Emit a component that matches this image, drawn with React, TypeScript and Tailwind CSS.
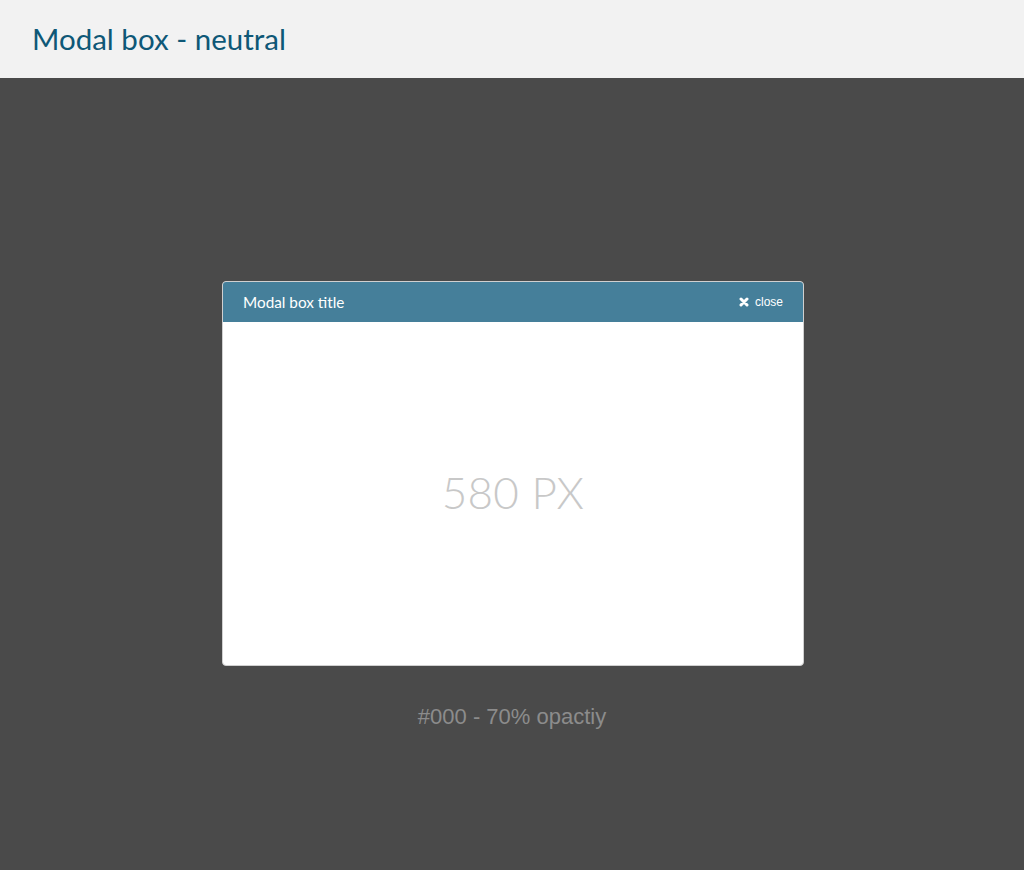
import React from "react";

const App = () => {
  return (
    <div className="w-full min-h-[870px] flex flex-col bg-[#4a4a4a]" style={{ fontFamily: "Lato, sans-serif" }}>
      <div className="h-[78px] bg-[#f2f2f2] flex items-center px-8">
        <h1 className="text-[29.5px] leading-none text-[#0e5877] font-[Lato,sans-serif]">Modal box - neutral</h1>
      </div>
      <div className="flex-1 flex flex-col items-center pt-[203px]">
        <div className="w-[582px] ml-[2px] rounded-[4px] border border-[#d0d0d0] bg-white overflow-hidden">
          <div className="h-[40px] bg-[#457f9a] flex items-center justify-between pl-5 pr-5">
            <span className="text-[15.3px] text-white">Modal box title</span>
            <button className="flex items-center gap-[6px] text-white text-[12px] font-['Liberation_Sans',Arial,sans-serif]">
              <svg width="10" height="10" viewBox="0 0 10 10">
                <path d="M2 2 L8 8 M8 2 L2 8" stroke="white" strokeWidth="3" strokeLinecap="round" />
              </svg>
              close
            </button>
          </div>
          <div className="h-[343px] flex items-center justify-center pb-[3px]">
            <span className="text-[44px] font-light text-[#c8c8c8] tracking-[0.3px]">580 PX</span>
          </div>
        </div>
        <p className="mt-[34px] text-[22px] text-[#8c8c8c] font-['Liberation_Sans',Arial,sans-serif]">#000 - 70% opactiy</p>
      </div>
    </div>
  );
};

export default App;
